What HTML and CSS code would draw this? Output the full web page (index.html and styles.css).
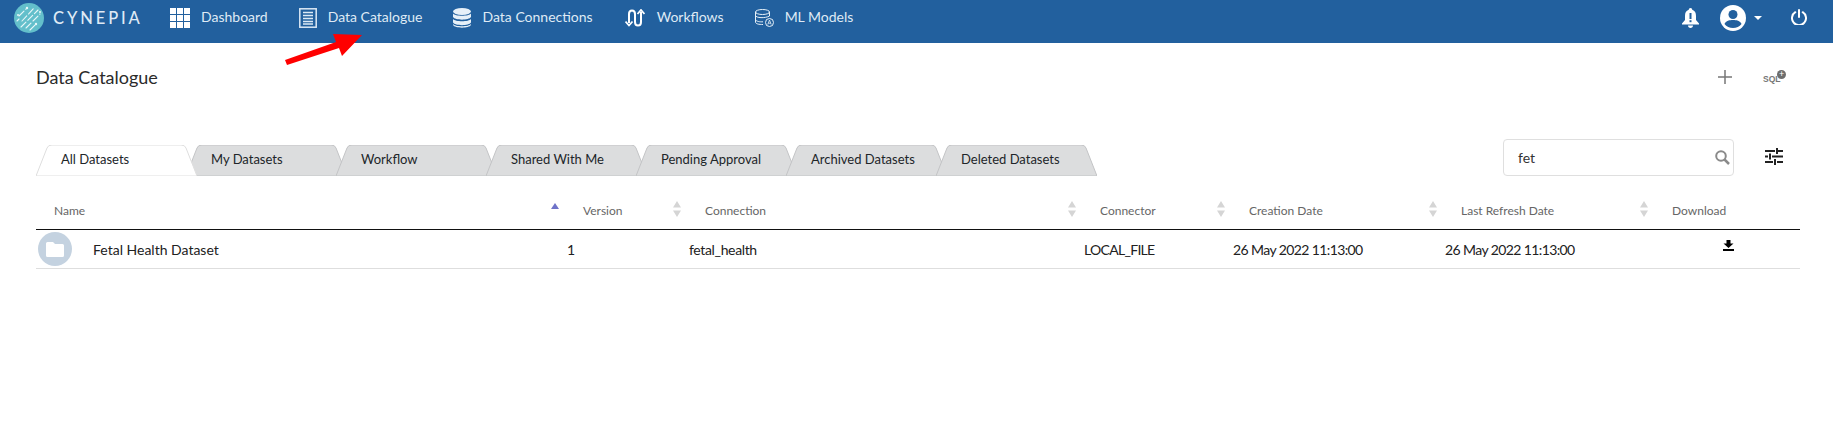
FILE: index.html
```html
<!DOCTYPE html>
<html lang="en">
<head>
<meta charset="utf-8">
<title>Data Catalogue</title>
<link rel="stylesheet" href="styles.css">
</head>
<body>
<svg class="defs" width="0" height="0" aria-hidden="true">
  <symbol id="tabshape" viewBox="0 0 161 31">
    <path d="M0 31 L11 3 Q12 0 16 0 L145 0 Q149 0 150 3 L161 31 Z"/>
  </symbol>
  <symbol id="sorter" viewBox="0 0 8 16">
    <path d="M4 0 L8 6.500 H0 Z M4 16 L0 9.500 H8 Z"/>
  </symbol>
</svg>

<nav class="topbar">
  <div class="brand">
    <svg class="brand-mark" viewBox="0 0 30 30">
      <circle cx="15" cy="15" r="15" fill="#63bfcb"/>
      <g stroke="#e8f7f9" stroke-width="1.100" stroke-linecap="round" fill="none" stroke-dasharray="7 2.500">
        <path d="M5 13 L12 6"/><path d="M8 18 L20 5"/><path d="M7 24 L24 7"/><path d="M12 25 L17 20"/><path d="M19 18 L26 11"/><path d="M16 27 L21 22"/><path d="M3 18 L5 16"/>
      </g>
      <g fill="#e8f7f9"><circle cx="13" cy="5" r="1.200"/><circle cx="22" cy="21" r="1.200"/><circle cx="4" cy="12" r="1"/><circle cx="26" cy="9" r="1"/></g>
    </svg>
    <span class="brand-name">CYNEPIA</span>
  </div>
  <div class="nav-links">
    <a class="nav-link">
      <svg class="nav-icon" width="20" height="20" viewBox="0 0 20 20" fill="#fff">
        <rect width="6" height="6"/><rect x="7" width="6" height="6"/><rect x="14" width="6" height="6"/>
        <rect y="7" width="6" height="6"/><rect x="7" y="7" width="6" height="6"/><rect x="14" y="7" width="6" height="6"/>
        <rect y="14" width="6" height="6"/><rect x="7" y="14" width="6" height="6"/><rect x="14" y="14" width="6" height="6"/>
      </svg>
      <span class="nav-text">Dashboard</span>
    </a>
    <a class="nav-link">
      <svg class="nav-icon" width="18" height="20" viewBox="0 0 18 20" fill="none" stroke="#dce9f5">
        <rect x="0.800" y="0.800" width="16.400" height="18.400" stroke-width="1.500"/>
        <path d="M4 4.500 H14 M4 7.500 H14 M4 10.500 H14 M4 13.500 H14 M4 16 H14" stroke-width="1.400"/>
      </svg>
      <span class="nav-text">Data Catalogue</span>
    </a>
    <a class="nav-link">
      <svg class="nav-icon" width="18" height="20" viewBox="0 0 18 20" fill="#e6f0f8">
        <ellipse cx="9" cy="3.500" rx="9" ry="3.500"/>
        <path d="M0 5.500 C2 8.500 16 8.500 18 5.500 V9 C16 12.500 2 12.500 0 9 Z"/>
        <path d="M0 11 C2 14 16 14 18 11 V14.500 C16 18 2 18 0 14.500 Z"/>
        <path d="M0 16 C2 19 16 19 18 16 V17 C16 20.500 2 20.500 0 17 Z"/>
      </svg>
      <span class="nav-text">Data Connections</span>
    </a>
    <a class="nav-link nav-link-flow">
      <svg class="nav-icon" width="20" height="18" viewBox="0 0 20 18" fill="none" stroke="#fff" stroke-width="2">
        <path d="M4 14 V5 Q4 1.500 7 1.500 Q10 1.500 10 5 V13 Q10 16.500 13 16.500 Q16 16.500 16 13 V3"/>
        <path d="M0.500 12.500 L4 16.500 L7.500 12.500" stroke-width="1.800"/>
        <path d="M12.500 5 L16 1 L19.500 5" stroke-width="1.800"/>
      </svg>
      <span class="nav-text">Workflows</span>
    </a>
    <a class="nav-link">
      <svg class="nav-icon" width="19" height="18" viewBox="0 0 19 18" fill="none" stroke="#e6f0f8" stroke-width="1">
        <ellipse cx="7.500" cy="3" rx="7" ry="2.500"/>
        <path d="M0.500 3 V13 C0.500 15 4 15.500 8 15.500"/>
        <path d="M0.500 6.500 C1 9 10 9.500 14.500 7 V3"/>
        <path d="M0.500 10.500 C1 12.500 5 13 8 12.800"/>
        <circle cx="14.500" cy="13.500" r="4"/>
        <path d="M12.800 15.500 L14.500 11 L16.200 15.500 M13.400 14.200 H15.600" stroke-width="0.800"/>
      </svg>
      <span class="nav-text">ML Models</span>
    </a>
  </div>
  <div class="nav-tools">
    <svg class="tool-bell" width="17" height="20" viewBox="0 0 17 20" fill="#fff">
      <path d="M8.500 0 C9.600 0 10.200 0.800 10.200 1.800 C13 2.600 14 5 14 8 V12 L17 15.500 V16.500 H0 V15.500 L3 12 V8 C3 5 4 2.600 6.800 1.800 C6.800 0.800 7.400 0 8.500 0 Z"/>
      <path d="M6 17.500 H11 C11 19 10 20 8.500 20 C7 20 6 19 6 17.500 Z"/>
      <rect x="7.500" y="5" width="2" height="6" fill="#22609e"/><rect x="7.500" y="12.200" width="2" height="2" fill="#22609e"/>
    </svg>
    <svg class="tool-user" width="26" height="26" viewBox="0 0 26 26" fill="#fff">
      <circle cx="13" cy="13" r="13"/>
      <circle cx="13" cy="9.500" r="4.500" fill="#22609e"/>
      <path d="M4.500 19 C6 15.500 9.500 15 13 15 C16.500 15 20 15.500 21.500 19 C19.500 21.500 16.500 23 13 23 C9.500 23 6.500 21.500 4.500 19 Z" fill="#22609e"/>
    </svg>
    <span class="tool-caret"></span>
    <svg class="tool-power" width="16" height="16" viewBox="0 0 16 16" fill="none" stroke="#fff" stroke-width="2" stroke-linecap="round">
      <path d="M4.300 3.200 A7 7 0 1 0 11.700 3.200"/>
      <path d="M8 1 V8"/>
    </svg>
  </div>
</nav>

<svg class="arrow" width="80" height="32" viewBox="0 0 80 32" fill="#ff0000">
  <path d="M1 27 L52 9 L49 1 L78 2 L58 23 L55 15 L3 32 Z"/>
</svg>

<main class="content">
  <header class="page-head">
    <h1 class="page-title">Data Catalogue</h1>
    <div class="page-actions">
      <svg class="action-plus" width="14" height="14" viewBox="0 0 14 14" stroke="#777" stroke-width="1.500"><path d="M7 0 V14 M0 7 H14"/></svg>
      <span class="action-sql"><span class="sql-text">SQL</span><span class="sql-plus">+</span></span>
    </div>
  </header>

  <div class="tab-row">
    <ul class="tabs">
      <li class="tab tab-active"><svg class="tab-bg"><use href="#tabshape"/></svg><span>All Datasets</span></li>
      <li class="tab"><svg class="tab-bg"><use href="#tabshape"/></svg><span>My Datasets</span></li>
      <li class="tab"><svg class="tab-bg"><use href="#tabshape"/></svg><span>Workflow</span></li>
      <li class="tab"><svg class="tab-bg"><use href="#tabshape"/></svg><span>Shared With Me</span></li>
      <li class="tab"><svg class="tab-bg"><use href="#tabshape"/></svg><span>Pending Approval</span></li>
      <li class="tab"><svg class="tab-bg"><use href="#tabshape"/></svg><span>Archived Datasets</span></li>
      <li class="tab"><svg class="tab-bg"><use href="#tabshape"/></svg><span>Deleted Datasets</span></li>
    </ul>
    <div class="search">
      <span class="search-value">fet</span>
      <svg width="15" height="15" viewBox="0 0 15 15" fill="none" stroke="#8a8a8a" stroke-width="2"><circle cx="6" cy="6" r="4.800"/><path d="M9.500 9.500 L14 14" stroke-width="2.500"/></svg>
    </div>
    <svg class="filters" width="18" height="17" viewBox="0 0 18 17" stroke="#222" stroke-width="2">
      <path d="M0 3 H10 M13 3 H18 M12 0 V6"/>
      <path d="M0 8.500 H3 M7 8.500 H18 M5 5.500 V11.500"/>
      <path d="M0 14 H8 M12 14 H18 M10 11 V17"/>
    </svg>
  </div>

  <section class="table">
    <div class="row row-head">
      <div class="th th-name"><span>Name</span><svg class="sort-up" width="8" height="6" viewBox="0 0 8 6"><path d="M4 0 L8 6 H0 Z"/></svg></div>
      <div class="th th-version"><span>Version</span><svg class="sort"><use href="#sorter"/></svg></div>
      <div class="th"><span>Connection</span><svg class="sort"><use href="#sorter"/></svg></div>
      <div class="th"><span>Connector</span><svg class="sort"><use href="#sorter"/></svg></div>
      <div class="th"><span>Creation Date</span><svg class="sort"><use href="#sorter"/></svg></div>
      <div class="th"><span>Last Refresh Date</span><svg class="sort"><use href="#sorter"/></svg></div>
      <div class="th"><span>Download</span></div>
    </div>
    <div class="row row-body">
      <div class="td td-name">
        <span class="folder-badge">
          <svg width="18" height="15" viewBox="0 0 18 15" fill="#fff"><path d="M1.500 0 H7 L9 2 H16.500 Q18 2 18 3.500 V13.500 Q18 15 16.500 15 H1.500 Q0 15 0 13.500 V1.500 Q0 0 1.500 0 Z"/></svg>
        </span>
        <span>Fetal Health Dataset</span>
      </div>
      <div class="td td-num">1</div>
      <div class="td td-conn">fetal_health</div>
      <div class="td td-type">LOCAL_FILE</div>
      <div class="td td-date">26 May 2022 11:13:00</div>
      <div class="td td-date">26 May 2022 11:13:00</div>
      <div class="td td-download">
        <svg width="11" height="11" viewBox="0 0 11 11" fill="#000"><path d="M3.500 0 H7.500 V3.500 H10.500 L5.500 8 L0.500 3.500 H3.500 Z"/><rect y="9" width="11" height="2"/></svg>
      </div>
    </div>
  </section>
</main>
</body>
</html>
```

FILE: styles.css
```css
* { box-sizing: border-box; }

html, body {
  margin: 0;
  padding: 0;
  background: #fff;
  font-family: Lato, "Open Sans", sans-serif;
  color: #212529;
}

body { position: relative; min-height: 428px; overflow: hidden; }

.defs { position: absolute; }

.topbar {
  display: flex;
  align-items: center;
  height: 43px;
  background: #22609e;
  color: #dfeaf5;
  padding-left: 14px;
  padding-bottom: 7px;
}

.brand { display: flex; align-items: center; width: 156px; flex: none; }
.brand-mark { width: 30px; height: 30px; flex: none; }
.brand-name {
  margin-left: 9px;
  font-size: 16.500px;
  letter-spacing: 2.900px;
  font-weight: 500;
  color: #dfeaf5;
}

.nav-links { display: flex; align-items: center; gap: 31px; font-size: 14px; }
.nav-link { display: flex; align-items: center; gap: 11px; }
.nav-link-flow { gap: 12px; margin-left: 1px; }
.nav-text { margin-top: -3px; }
.nav-icon { flex: none; }

.nav-tools { display: flex; align-items: center; margin-left: auto; padding-right: 26px; }
.tool-user { margin-left: 21px; }
.tool-caret {
  margin-left: 8px;
  border-left: 4px solid transparent;
  border-right: 4px solid transparent;
  border-top: 4px solid #fff;
}
.tool-power { margin-left: 29px; margin-top: -3px; }

.arrow { position: absolute; left: 284px; top: 33px; }

.content { padding: 0 33px 0 36px; }

.page-head {
  display: flex;
  align-items: center;
  justify-content: space-between;
  height: 68px;
}
.page-title { margin: 0; font-size: 18px; font-weight: 400; line-height: 22px; color: #2b2b2b; }
.page-actions { display: flex; align-items: center; }
.action-plus { margin-right: 31px; }
.action-sql { position: relative; display: block; width: 23px; height: 12px; margin-right: 14px; }
.sql-text {
  position: absolute;
  left: 0;
  bottom: -1px;
  font-family: "Liberation Sans", sans-serif;
  font-size: 8.500px;
  font-weight: 700;
  color: #777;
}
.sql-plus {
  position: absolute;
  right: 0;
  top: -1px;
  width: 9px;
  height: 9px;
  border-radius: 50%;
  background: #6d6d6d;
  color: #fff;
  font-size: 9px;
  line-height: 8px;
  text-align: center;
}

.tab-row { display: flex; align-items: flex-start; margin-top: 28px; height: 37px; }

.tabs {
  display: flex;
  list-style: none;
  margin: 6px 0 0;
  padding: 0;
  width: 1467px;
  flex: none;
}
.tab {
  position: relative;
  flex: none;
  width: 150px;
  height: 31px;
  font-size: 13px;
  line-height: 29px;
  padding-left: 25px;
  white-space: nowrap;
}
.tab span { position: relative; }
.tab-bg {
  position: absolute;
  left: 0;
  top: 0;
  width: 161px;
  height: 31px;
  overflow: visible;
  fill: #dcddde;
  stroke: #c3c4c6;
  stroke-width: 1;
}
.tab-active { z-index: 2; }
.tab-active .tab-bg { fill: #fff; stroke: #dedede; }

.search {
  display: flex;
  align-items: center;
  justify-content: space-between;
  width: 231px;
  height: 37px;
  flex: none;
  border: 1px solid #dfdfdf;
  border-radius: 4px;
  padding: 0 3px 0 14px;
  font-size: 14px;
  color: #333;
}
.filters { flex: none; margin: 9px 0 0 31px; }

.table { margin-top: 16px; }
.row {
  display: grid;
  grid-template-columns: 535px 118px 395px 149px 212px 211px 144px;
  width: 1764px;
}
.row-head { height: 38px; border-bottom: 1.500px solid #111; }
.row-body { height: 39px; border-bottom: 1px solid #dedede; align-items: center; }

.th {
  display: flex;
  align-items: center;
  justify-content: space-between;
  padding: 0 8px 0 16px;
  font-size: 12px;
  color: #666;
}
.th-name { padding: 0 12px 0 18px; position: relative; }
.th-version { padding-left: 12px; }
.sort { width: 8px; height: 16px; fill: #d5d5d5; margin-top: -4px; }
.sort-up { fill: #6f73c9; margin-top: -10px; }

.td { font-size: 14px; color: #212121; white-space: nowrap; }
.td-name { display: flex; align-items: center; gap: 21px; padding-left: 2px; }
.td-num { margin-left: -4px; }
.td-conn { letter-spacing: -0.350px; }
.td-type { letter-spacing: -0.700px; }
.td-date { letter-spacing: -0.600px; }
.folder-badge {
  display: flex;
  align-items: center;
  justify-content: center;
  width: 34px;
  height: 34px;
  border-radius: 50%;
  background: #c4d2e0;
}
.td-download { padding-left: 67px; line-height: 0; margin-top: -7px; }
```
